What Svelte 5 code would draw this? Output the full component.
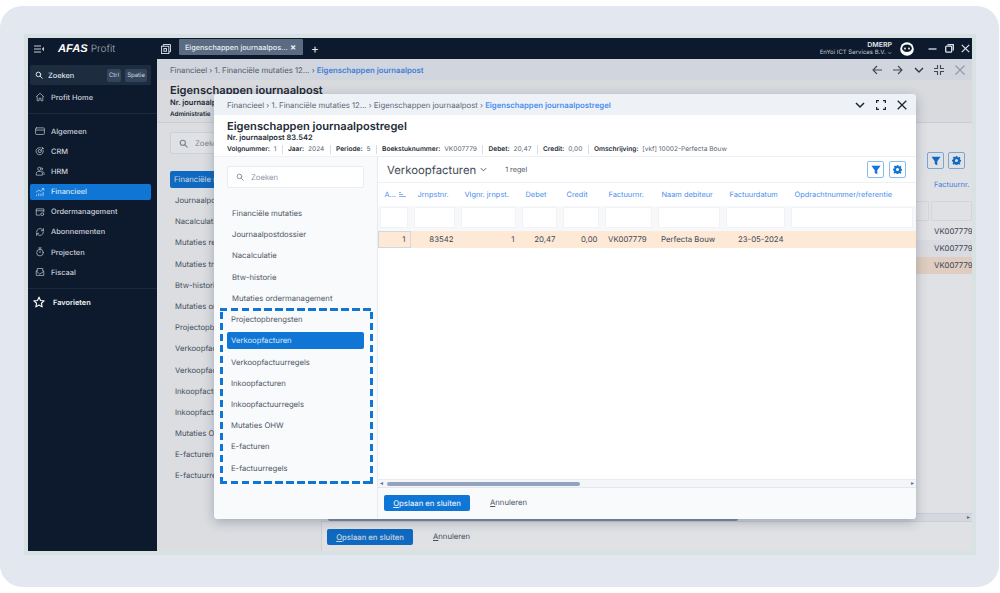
<script>
  const nav = [
    { label: 'Algemeen', icon: 'card' },
    { label: 'CRM', icon: 'target' },
    { label: 'HRM', icon: 'people' },
    { label: 'Financieel', icon: 'chart', active: true },
    { label: 'Ordermanagement', icon: 'order' },
    { label: 'Abonnementen', icon: 'sync' },
    { label: 'Projecten', icon: 'timer' },
    { label: 'Fiscaal', icon: 'mail' }
  ];
  const backList = ['Journaalpostdossier', 'Nacalculatie', 'Mutaties rekening', 'Mutaties transitie', 'Btw-historie', 'Mutaties ordermanagement', 'Projectopbrengsten', 'Verkoopfacturen', 'Verkoopfactuurregels', 'Inkoopfacturen', 'Inkoopfactuurregels', 'Mutaties OHW', 'E-facturen', 'E-factuurregels'];
  const topList = ['Financiële mutaties', 'Journaalpostdossier', 'Nacalculatie', 'Btw-historie', 'Mutaties ordermanagement'];
  const boxList = ['Projectopbrengsten', 'Verkoopfacturen', 'Verkoopfactuurregels', 'Inkoopfacturen', 'Inkoopfactuurregels', 'Mutaties OHW', 'E-facturen', 'E-factuurregels'];
  const cols = [
    { label: 'A...', w: 33, val: '1', align: 'right', sort: true },
    { label: 'Jrnpstnr.', w: 47, val: '83542', align: 'right' },
    { label: 'Vlgnr. jrnpst.', w: 61, val: '1', align: 'right' },
    { label: 'Debet', w: 41, val: '20,47', align: 'right' },
    { label: 'Credit', w: 42, val: '0,00', align: 'right' },
    { label: 'Factuurnr.', w: 53, val: 'VK007779', align: 'left' },
    { label: 'Naam debiteur', w: 68, val: 'Perfecta Bouw', align: 'left' },
    { label: 'Factuurdatum', w: 65, val: '23-05-2024', align: 'right' },
    { label: 'Opdrachtnummer/referentie', w: 128, val: '', align: 'left' }
  ];
  const meta = [['Volgnummer:', '1'], ['Jaar:', '2024'], ['Periode:', '5'], ['Boekstuknummer:', 'VK007779'], ['Debet:', '20,47'], ['Credit:', '0,00'], ['Omschrijving:', '[vkf] 10002-Perfecta Bouw']];
</script>

{#snippet navIcon(name)}
  <svg class="nicon" viewBox="0 0 16 16" fill="none" stroke="currentColor" stroke-width="1.2" stroke-linecap="round" stroke-linejoin="round">
    {#if name === 'card'}
      <rect x="1" y="3" width="14" height="10.500" rx="1.2" /><path d="M1 6.500h14" />
    {:else if name === 'target'}
      <path d="M13 6.500A5.800 5.800 0 1 1 9.500 2.800" /><path d="M10.300 7.200A2.700 2.700 0 1 1 8 5.300" /><path d="M8 8l4-4M12 4V2.200M12 4h1.800" />
    {:else if name === 'people'}
      <circle cx="7" cy="4.500" r="2.600" /><path d="M2 14v-2c0-2 1.500-3.200 3.200-3.200h3.600C10.500 8.800 12 10 12 12v2zM11 2.500a2.500 2.500 0 0 1 0 4.500M12.500 9c1.200.4 2 1.500 2 3v1.500" />
    {:else if name === 'chart'}
      <path d="M2 8l4-3 3 2 5-4.500M11.500 2.500H14V5" /><path d="M2.500 14v-2M6 14v-4M9.500 14v-3M13 14V8" stroke-dasharray="1.200 1" />
    {:else if name === 'order'}
      <path d="M14 8V3H2v10h6M2 6h12" /><circle cx="11.500" cy="11.500" r="2.300" />
    {:else if name === 'sync'}
      <path d="M2.500 8a5.500 5.500 0 0 1 9.500-3.800L13.500 6M13.500 2.500V6H10M13.500 8A5.500 5.500 0 0 1 4 11.800L2.500 10M2.500 13.500V10H6" />
    {:else if name === 'timer'}
      <circle cx="8" cy="9" r="5.300" /><path d="M6 1.500h4M8 1.500v2M8 9V6.500" />
    {:else if name === 'mail'}
      <path d="M2 7v6.500h12V7L8 11zM3.500 6V2.500h9V6" /><path d="M2 7l1.500-1M14 7l-1.500-1" />
    {/if}
  </svg>
{/snippet}

{#snippet search(size)}
  <svg class="search" width={size} height={size} viewBox="0 0 16 16" fill="none" stroke="currentColor" stroke-width="2" stroke-linecap="round"><circle cx="6.800" cy="6.800" r="4.600" /><path d="M10.500 10.500L14.500 14.500" /></svg>
{/snippet}

{#snippet filterBtn()}
  <span class="tbtn"><svg width="10" height="10" viewBox="0 0 12 12" fill="currentColor"><path d="M0.500 1h11L7.500 6.200V11L4.500 9.500V6.200z" /></svg></span>
{/snippet}
{#snippet gearBtn()}
  <span class="tbtn"><svg width="9" height="9" viewBox="0 0 16 16" fill="currentColor"><path fill-rule="evenodd" d="M6.600 0h2.800l.4 2.200 1.400.6 1.900-1.300 2 2-1.300 1.900.6 1.400 2.100.4v2.800l-2.200.4-.6 1.400 1.300 1.900-2 2-1.900-1.300-1.400.6-.4 2.100H6.600l-.4-2.200-1.400-.6-1.900 1.300-2-2 1.300-1.900-.6-1.400L0 9.400V6.600l2.200-.4.6-1.400L1.500 2.900l2-2 1.900 1.300 1.400-.6zM8 5.300a2.700 2.700 0 1 0 0 5.400 2.700 2.700 0 0 0 0-5.400z" /></svg></span>
{/snippet}

<div class="frame">
  <div class="app">
    <header class="topbar">
      <div class="brand">
        <svg class="menu" width="10" height="8" viewBox="0 0 10 8" fill="none" stroke="#c6ccd6" stroke-width="1"><path d="M0 1h7M0 4h7M0 7h7" /><path d="M10 1.800L7.800 4 10 6.200z" fill="#c6ccd6" stroke="none" /></svg>
        <span class="logo">AFAS</span><span class="profit">Profit</span>
      </div>
      <svg class="tabs-icon" width="10" height="10" viewBox="0 0 11 11" fill="none" stroke="#d5dae2" stroke-width="1.100"><rect x="0.600" y="2.500" width="8" height="8" /><path d="M2.500 2.500V.6h8v8H8.600" /><rect x="3.200" y="5" width="2.800" height="3" /></svg>
      <div class="tab"><span>Eigenschappen journaalpos...</span><b>×</b></div>
      <span class="plus">+</span>
      <div class="user">
        <div class="user-text"><strong>DMERP</strong><span>EnYoi ICT Services B.V. ⌄</span></div>
        <svg class="avatar" width="14" height="14" viewBox="0 0 14 14"><circle cx="7" cy="7" r="6.800" fill="#fff" /><ellipse cx="7" cy="6.200" rx="4.800" ry="3.800" fill="#0d1a2d" /><circle cx="5" cy="6.500" r=".9" fill="#fff" /><circle cx="9" cy="6.500" r=".9" fill="#fff" /></svg>
        <svg class="win" width="9" height="9" viewBox="0 0 9 9" fill="none" stroke="#dfe3ea" stroke-width="1.300"><path d="M0.500 5h8" /></svg>
        <svg class="win" width="9" height="9" viewBox="0 0 9 9" fill="none" stroke="#dfe3ea" stroke-width="1.300"><rect x="0.700" y="2.200" width="6" height="6" rx="1" /><path d="M2.500.7h5.800v5.800" /></svg>
        <svg class="win" width="9" height="9" viewBox="0 0 9 9" fill="none" stroke="#dfe3ea" stroke-width="1.200"><path d="M.8.800l7.400 7.400M8.200.800L.8 8.200" /></svg>
      </div>
    </header>
    <div class="body">
      <aside class="sidebar">
        <div class="zoek">
          {@render search(8)}
          <span class="zoek-label">Zoeken</span>
          <kbd>Ctrl</kbd><kbd>Spatie</kbd>
        </div>
        <div class="navrow home">
          <svg class="nicon" viewBox="0 0 16 16" fill="none" stroke="currentColor" stroke-width="1.200" stroke-linejoin="round"><path d="M1.500 8L8 2l6.500 6M3.500 7v7h3v-4h3v4h3V7" /></svg>
          <span>Profit Home</span>
        </div>
        <div class="sep"></div>
        {#each nav as n}
          <div class="navrow" class:active={n.active}>
            {@render navIcon(n.icon)}
            <span>{n.label}</span>
          </div>
        {/each}
        <div class="sep sep2"></div>
        <div class="navrow fav">
          <svg width="12" height="12" viewBox="0 0 16 16" fill="none" stroke="#fff" stroke-width="1.500" stroke-linejoin="round"><path d="M8 1.500l2 4.500 4.800.5-3.600 3.200 1 4.800L8 12.100l-4.200 2.400 1-4.800L1.200 6.500 6 6z" /></svg>
          <span>Favorieten</span>
        </div>
      </aside>

      <main class="back">
        <div class="crumbs back-crumbs">
          <span>Financieel › 1. Financiële mutaties 12... › <em>Eigenschappen journaalpost</em></span>
          <div class="back-actions">
            <svg width="10" height="10" viewBox="0 0 10 10" fill="none" stroke="#46505e" stroke-width="1.100"><path d="M10 5H1M5 1L1 5l4 4" /></svg>
            <svg width="10" height="10" viewBox="0 0 10 10" fill="none" stroke="#46505e" stroke-width="1.100"><path d="M0 5h9M5 1l4 4-4 4" /></svg>
            <svg width="10" height="10" viewBox="0 0 10 10" fill="none" stroke="#333d4b" stroke-width="1.400"><path d="M1 3l4 4 4-4" /></svg>
            <svg width="10" height="10" viewBox="0 0 10 10" fill="none" stroke="#46505e" stroke-width="1.100"><path d="M3.500 0v3.500H0M6.500 0v3.500H10M3.500 10V6.500H0M6.500 10V6.500H10" /></svg>
            <svg width="10" height="10" viewBox="0 0 10 10" fill="none" stroke="#a3adbb" stroke-width="1.100"><path d="M.5.500l9 9M9.500.500l-9 9" /></svg>
          </div>
        </div>
        <div class="back-head">
          <h2>Eigenschappen journaalpost</h2>
          <p class="b1">Nr. journaalpost 83.542</p>
          <p class="b2">Administratie</p>
        </div>
        <div class="back-content">
          <div class="back-left">
            <div class="back-search">{@render search(9)}<span>Zoeken</span></div>
            <div class="back-active">Financiële mutaties</div>
            {#each backList as b}<div class="back-item">{b}</div>{/each}
          </div>
          <div class="back-right">
            <div class="back-tools">{@render filterBtn()}{@render gearBtn()}</div>
            <div class="back-colhead">Factuurnr.</div>
            <div class="back-filter"><i></i><i></i></div>
            <div class="back-vk">VK007779</div>
            <div class="back-vk alt">VK007779</div>
            <div class="back-vk sel">VK007779</div>
            <div class="back-spacer"></div>
            <div class="back-scroll"><span class="thumb"></span><span class="arrow">▸</span></div>
            <div class="back-foot">
              <span class="btn"><u>O</u>pslaan en sluiten</span>
              <span class="link"><u>A</u>nnuleren</span>
            </div>
          </div>
        </div>
        <div class="dim"></div>
      </main>
    </div>
  </div>
</div>

<section class="modal">
  <div class="crumbs modal-crumbs">
    <span>Financieel › 1. Financiële mutaties 12... › Eigenschappen journaalpost › <em>Eigenschappen journaalpostregel</em></span>
    <div class="modal-actions">
      <svg width="10" height="10" viewBox="0 0 10 10" fill="none" stroke="#1c2430" stroke-width="1.500"><path d="M1 3l4 4 4-4" /></svg>
      <svg width="10" height="10" viewBox="0 0 10 10" fill="none" stroke="#1c2430" stroke-width="1.200"><path d="M0.600 3V.6H3M7 .6h2.400V3M9.400 7v2.400H7M3 9.400H.6V7" /></svg>
      <svg width="10" height="10" viewBox="0 0 10 10" fill="none" stroke="#1c2430" stroke-width="1.300"><path d="M.7.700l8.600 8.600M9.300.700L.7 9.300" /></svg>
    </div>
  </div>
  <div class="modal-head">
    <h1>Eigenschappen journaalpostregel</h1>
    <p class="nr">Nr. journaalpost 83.542</p>
    <div class="meta">
      {#each meta as m}<span class="m"><b>{m[0]}</b> {m[1]}</span>{/each}
    </div>
  </div>
  <div class="modal-body">
    <div class="mleft">
      <div class="msearch">{@render search(8)}<span>Zoeken</span></div>
      <div class="mlist">
        {#each topList as t}<div class="mitem">{t}</div>{/each}
      </div>
      <div class="dashed">
        {#each boxList as t}<div class="mitem" class:sel={t === 'Verkoopfacturen'}>{t}</div>{/each}
      </div>
    </div>
    <div class="mright">
      <div class="toolbar">
        <span class="vf">Verkoopfacturen</span>
        <svg width="7" height="7" viewBox="0 0 8 8" fill="none" stroke="#4a5463" stroke-width="1.100"><path d="M1 2.500l3 3 3-3" /></svg>
        <span class="count">1 regel</span>
        <div class="tools">{@render filterBtn()}{@render gearBtn()}</div>
      </div>
      <div class="grid">
        <div class="row heads">
          {#each cols as c}<div class="cell" style="width:{c.w}px">{c.label}{#if c.sort}<svg class="sort" width="7" height="5" viewBox="0 0 7 5" fill="none" stroke="#7fb1ea" stroke-width="1"><path d="M0 4.500h7M0 2.500h4M0 .5h2" /></svg>{/if}</div>{/each}
        </div>
        <div class="row filters">
          {#each cols as c}<div class="fcell" style="width:{c.w}px"><i></i></div>{/each}
        </div>
        <div class="row data">
          {#each cols as c, i}<div class="dcell" class:first={i === 0} style="width:{c.w}px;text-align:{c.align}">{c.val}</div>{/each}
        </div>
      </div>
      <div class="hscroll"><span class="arrow">◂</span><span class="thumb"></span><span class="arrow right">▸</span></div>
      <div class="mfoot">
        <span class="btn"><u>O</u>pslaan en sluiten</span>
        <span class="link"><u>A</u>nnuleren</span>
      </div>
    </div>
  </div>
</section>

<style>
  :global(body) { margin: 0; background: #fff; font-family: Inter, "Liberation Sans", sans-serif; text-rendering: geometricPrecision; }
  * { box-sizing: border-box; }
  p, h1, h2 { margin: 0; }
  em { font-style: normal; font-weight: 600; color: #4a8ef0; }

  .frame { margin-top: 6px; height: 581px; width: 999px; background: #e3e8f0; border-radius: 22px; padding: 28px 23px 32px 24px; }
  .app { height: 521px; border: 4px solid #d8e2e2; display: flex; flex-direction: column; background: #d9dde5; overflow: hidden; }

  .topbar { flex: none; height: 21px; background: #0d1a2d; display: flex; align-items: center; color: #fff; }
  .brand { width: 129px; display: flex; align-items: center; padding-left: 6px; flex: none; }
  .menu { margin-right: 14px; }
  .logo { font-family: "Liberation Sans", sans-serif; font-style: italic; font-weight: 700; font-size: 11.200px; color: #fff; margin-right: 3px; }
  .profit { font-size: 10px; color: #a9b1bd; font-weight: 300; }
  .tabs-icon { margin-left: 4px; margin-right: 8px; }
  .tab { align-self: flex-start; margin-top: 1px; width: 124px; height: 16px; background: #5a6b82; border-radius: 1px; color: #e9edf2; font-size: 7.250px; font-weight: 500; display: flex; align-items: center; justify-content: space-between; padding: 0 7px 0 6px; white-space: nowrap; }
  .tab b { font-size: 9px; line-height: 1; }
  .plus { margin-left: 8px; font-size: 12px; color: #e6e9ef; }
  .user { margin-left: auto; display: flex; align-items: center; padding-right: 2px; }
  .user-text { display: flex; flex-direction: column; align-items: flex-end; line-height: 8px; }
  .user-text strong { font-size: 7px; font-weight: 600; color: #e3e6eb; }
  .user-text span { font-size: 6px; color: #c3c9d2; white-space: nowrap; }
  .avatar { margin: 0 14px 0 8px; }
  .win { margin-left: 7.500px; }
  .avatar + .win { margin-left: 0; }

  .body { flex: 1; display: flex; min-height: 0; }
  .sidebar { flex: none; width: 129px; background: #0d1a2d; color: #d4d9e0; padding: 6px 0 0; }
  .zoek { margin: 0 6px 0 2px; height: 20px; background: #1e2c40; border-radius: 2px; display: flex; align-items: center; padding: 0 4px 0 5px; font-size: 7.400px; gap: 3px; color: #dfe3e9; }
  .zoek-label { margin-left: 2px; margin-right: auto; font-weight: 500; }
  kbd { font-family: inherit; font-size: 6px; background: #33445c; color: #cfd6df; border-radius: 2px; padding: 3px 2px; line-height: 7px; margin-left: 1px; }
  .navrow { height: 16px; margin: 0 6px 4.200px 2px; padding-left: 5px; display: flex; align-items: center; gap: 6px; font-size: 7.400px; font-weight: 500; border-radius: 2px; color: #cdd3db; }
  .home { margin-top: 4px; margin-bottom: 8px; }
  .nicon { width: 10px; height: 10px; flex: none; color: #b8bfc9; }
  .active { background: #0f76d6; color: #dbe9f7; }
  .active .nicon { color: #cfe3f7; }
  .sep { height: 1px; background: #1c2a3d; margin-bottom: 9px; }
  .sep2 { margin-top: 8px; margin-bottom: 5px; }
  .fav { font-weight: 600; color: #f0f2f5; gap: 8px; margin-left: 3px; padding-left: 2px; }

  .back { flex: 1; position: relative; display: flex; flex-direction: column; background: #fff; min-width: 0; overflow: hidden; color: #3e4855; }
  .crumbs { display: flex; align-items: center; justify-content: space-between; font-size: 7.750px; color: #5c6675; white-space: nowrap; }
  .back-crumbs { height: 21px; background: #eef2f7; padding: 0 7px 0 13px; flex: none; }
  .back-actions { display: flex; gap: 10.750px; align-items: center; }
  .back-head { flex: none; height: 43px; background: #f6f7f9; padding: 4px 13px 0; border-bottom: 1px solid #e6e9ee; color: #232b36; }
  .back-head h2 { font-size: 11.100px; font-weight: 600; line-height: 13px; }
  .b1 { font-size: 7.500px; font-weight: 600; line-height: 11px; }
  .b2 { font-size: 6.300px; font-weight: 600; line-height: 9px; margin-top: 2px; }
  .back-content { flex: 1; display: flex; min-height: 0; }
  .back-left { flex: none; width: 164px; background: #fafbfc; padding: 9px 0 0 13px; font-size: 7.700px; color: #4e5866; }
  .back-search { height: 22px; width: 148px; background: #fff; border: 1px solid #e9ecf1; border-radius: 2px; display: flex; align-items: center; gap: 7px; padding-left: 8px; color: #8d96a4; margin-bottom: 17px; }
  .back-active { height: 17px; width: 148px; background: #0f76d6; color: #e6f0fa; border-radius: 2px; padding-left: 4px; line-height: 17px; margin-bottom: 2px; }
  .back-item { height: 21.200px; line-height: 21.200px; padding-left: 5px; white-space: nowrap; }
  .back-right { flex: 1; min-width: 0; background: #fff; display: flex; flex-direction: column; border-left: 1px solid #e8ebf0; }
  .back-tools { flex: none; height: 46px; display: flex; justify-content: flex-end; align-items: flex-end; gap: 4px; margin-right: 7px; }
  .back-colhead { flex: none; height: 31px; line-height: 31px; padding-left: 612px; font-size: 7.400px; color: #4a8ef0; }
  .back-filter { flex: none; height: 22.500px; display: flex; justify-content: flex-end; align-items: center; gap: 2px; }
  .back-filter i { width: 41px; height: 20px; background: #fff; border: 1px solid #f0f2f5; display: block; border-radius: 1px; }
  .back-filter i:first-child { width: 14px; }
  .back-vk { flex: none; height: 17px; line-height: 17px; padding-left: 612px; font-size: 7.800px; color: #3e4855; }
  .back-vk.sel { background: #fde9d6; }
  .back-vk.alt { background: #f8f9fb; }
  .back-spacer { flex: 1; }
  .back-scroll { flex: none; height: 9px; background: #f3f5f8; border-top: 1px solid #e6eaf0; border-bottom: 1px solid #e6eaf0; font-size: 6px; line-height: 7px; padding-right: 2px; color: #5f7192; display: flex; }
  .back-scroll .thumb { width: 410px; margin-left: 6px; height: 4px; margin-top: 3px; }
  .back-scroll .arrow { margin-left: auto; }
  .back-foot { flex: none; height: 29px; padding: 7px 5px; display: flex; align-items: flex-start; gap: 20px; background: #fff; }
  .dim { position: absolute; inset: 0; background: rgba(13, 26, 45, 0.13); }

  .btn { background: #0f76d6; color: #e3eefa; height: 16px; width: 86px; border-radius: 2px; display: inline-flex; align-items: center; justify-content: center; font-size: 7.700px; font-weight: 500; flex: none; }
  .link { font-size: 7.700px; color: #4e5866; height: 16px; line-height: 16px; }
  u { text-underline-offset: 1px; }

  .modal { position: absolute; left: 214px; top: 94px; width: 702px; height: 425px; background: #fff; border-radius: 4px; box-shadow: 0 3px 12px rgba(20, 35, 60, 0.28); display: flex; flex-direction: column; overflow: hidden; color: #3e4855; }
  .modal-crumbs { height: 21px; flex: none; background: #eef2f7; padding: 0 9px 0 13px; }
  .modal-actions { display: flex; gap: 11px; align-items: center; }
  .modal-head { flex: none; height: 42px; padding: 4px 13px 0; background: #fff; color: #232b36; border-bottom: 1px solid #edf0f5; }
  .modal-head h1 { font-size: 11.100px; font-weight: 600; line-height: 14px; white-space: nowrap; }
  .nr { font-size: 7.500px; font-weight: 600; line-height: 10px; }
  .meta { display: flex; font-size: 6.600px; line-height: 9px; margin-top: 2px; white-space: nowrap; color: #5c6675; }
  .m { padding-right: 5.300px; margin-right: 5.300px; border-right: 1px solid #d8dde4; }
  .m:last-child { border: 0; }
  .m b { font-weight: 600; color: #232b36; margin-right: 2px; }

  .modal-body { flex: 1; display: flex; min-height: 0; }
  .mleft { flex: none; width: 164px; background: #f9fafc; padding: 9px 0 0 6px; border-right: 1px solid #e7eaef; font-size: 7.700px; color: #4e5866; }
  .msearch { margin-left: 7px; width: 137px; height: 22px; background: #fff; border: 1px solid #e9ecf1; border-radius: 2px; display: flex; align-items: center; gap: 7px; padding-left: 8px; color: #8d96a4; }
  .mlist { margin: 15px 0 0 0; }
  .mitem { height: 21.200px; line-height: 21.200px; padding-left: 12px; white-space: nowrap; }
  .dashed { width: 153px; height: 176px; margin-top: -1px; padding-bottom: 4px; display: flex; flex-direction: column; justify-content: center; background-image:
      repeating-linear-gradient(90deg, #0f76d6 0 7.500px, transparent 7.500px 11px),
      repeating-linear-gradient(90deg, #0f76d6 0 7.500px, transparent 7.500px 11px),
      repeating-linear-gradient(0deg, #0f76d6 0 7.500px, transparent 7.500px 11px),
      repeating-linear-gradient(0deg, #0f76d6 0 7.500px, transparent 7.500px 11px);
    background-size: 100% 3px, 100% 3px, 3px 100%, 3px 100%;
    background-position: 0 0, 0 100%, 0 0, 100% 0;
    background-repeat: no-repeat;
  }
  .dashed .mitem { padding-left: 11px; }
  .dashed .mitem.sel { background: #0f76d6; color: #dbe9f7; width: 137px; margin: 2px 0 2.200px 7px; height: 17px; line-height: 17px; border-radius: 2px; padding-left: 4px; }

  .mright { flex: 1; min-width: 0; background: #fff; display: flex; flex-direction: column; }
  .toolbar { flex: none; height: 26px; display: flex; align-items: center; padding-left: 9px; border-bottom: 1px solid #edf0f5; }
  .vf { font-size: 11.300px; color: #3e4855; margin-right: 4px; }
  .count { font-size: 7.200px; margin-left: 18px; color: #4e5866; }
  .tools { margin-left: auto; display: flex; gap: 5px; margin-right: 10px; }
  .tbtn { width: 17px; height: 17px; border: 1px solid #8cbcec; border-radius: 2px; display: flex; align-items: center; justify-content: center; color: #0f76d6; background: #fff; }
  .grid { flex: 1; display: flex; flex-direction: column; min-height: 0; }
  .row { display: flex; flex: none; }
  .heads { height: 23px; align-items: center; font-size: 7.400px; color: #4a8ef0; }
  .cell { flex: none; padding-left: 6.500px; white-space: nowrap; display: flex; align-items: center; gap: 3px; }
  .filters { height: 25px; background: #f7f8fa; padding-top: 1px; }
  .fcell { flex: none; padding: 0 3px; height: 21px; }
  .fcell:first-child { padding-left: 2px; }
  .fcell i { display: block; height: 100%; background: #fff; border: 1px solid #f0f2f5; border-radius: 1px; }
  .data { height: 17px; background: #fde9d6; font-size: 7.800px; color: #3e4855; line-height: 17px; }
  .dcell { flex: none; padding: 0 4.500px 0 6px; white-space: nowrap; }
  .dcell.first { border: 1px solid #cfd8e3; line-height: 15px; }
  .hscroll { flex: none; height: 9px; background: #f3f5f8; border-top: 1px solid #e8ecf2; border-bottom: 1px solid #e3e8ef; display: flex; align-items: center; font-size: 6px; color: #5f7192; padding: 0 2px; }
  .thumb { display: block; width: 193px; height: 4px; background: #93a3bb; border-radius: 2px; margin-left: 4px; }
  .arrow.right { margin-left: auto; }
  .mfoot { flex: none; height: 31px; padding: 7px 6px; display: flex; align-items: flex-start; gap: 20px; background: #f9fafc; }
</style>
